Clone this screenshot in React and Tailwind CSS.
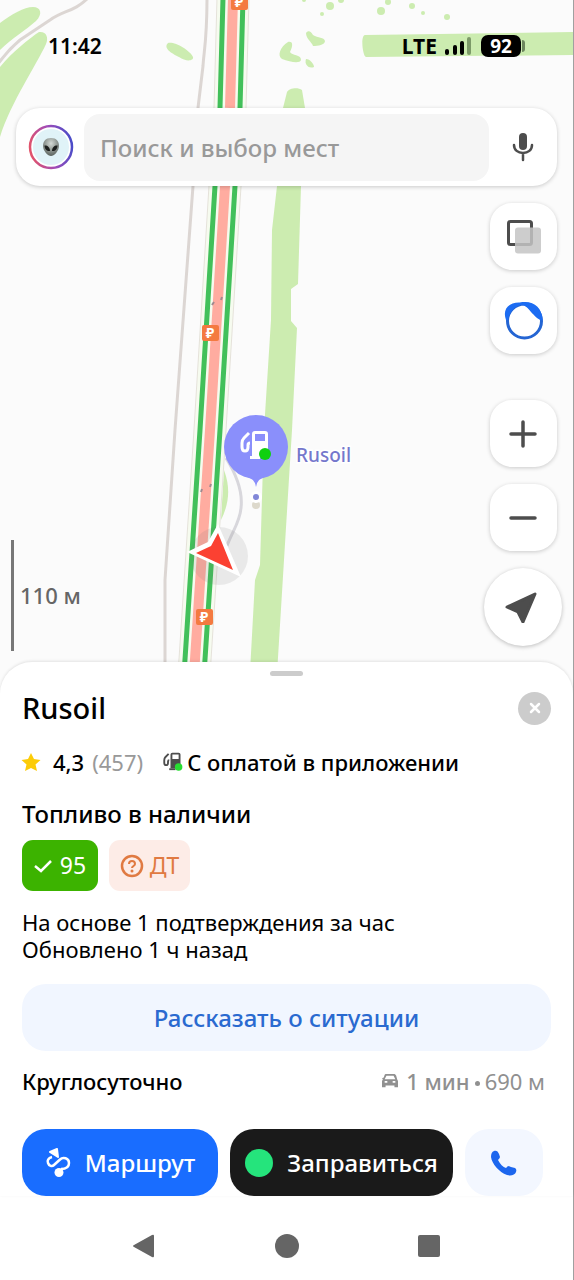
import { useState } from 'react';

const tolls = [
  { x: 239, y: 2 },
  { x: 210, y: 333 },
  { x: 204, y: 617 },
];

const treeDots = [
  { x: 304, y: 0, r: 2 },
  { x: 322, y: 14, r: 2 },
  { x: 330, y: 6, r: 4 },
  { x: 341, y: 0, r: 3 },
  { x: 381, y: 11, r: 4 },
  { x: 388, y: 2, r: 3 },
  { x: 412, y: 6, r: 3 },
  { x: 423, y: 13, r: 2 },
  { x: 447, y: 17, r: 3 },
];

// shared by the map pin and the payment row, the colour comes from currentColor
function PumpShape({ dotColor }) {
  return (
    <>
      <path
        d="M9 3L4 8Q2 10 2 13V17Q2 21 5 21Q8 21 8 17V15Q8 13 10 13"
        fill="none"
        stroke="currentColor"
        strokeWidth="3"
        strokeLinejoin="round"
      />
      <path fillRule="evenodd" d="M15 1H25Q28 1 28 4V26H12V4Q12 1 15 1ZM15 4V11H25V4Z" fill="currentColor" />
      <rect x="10" y="26" width="10" height="3" fill="currentColor" />
      <circle cx="25" cy="24" r="6" fill={dotColor} />
    </>
  );
}

function MapCanvas() {
  return (
    <svg
      viewBox="0 0 574 690"
      preserveAspectRatio="xMinYMin slice"
      className="absolute inset-0 h-full w-full"
      aria-hidden="true"
    >
      <rect width="2000" height="690" fill="#fbfbfb" />

      {/* greenery */}
      <g fill="#ccecb0">
        <path d="M0 23C12 14 24 7 33 7C41 7 43 14 36 21C26 30 12 38 0 50Z" />
        <path d="M0 67C12 52 30 38 39 32C46 31 49 37 46 44C38 62 10 104 0 137Z" />
        <path d="M168 43C174 41 190 50 193 57C194 61 186 62 179 57C171 53 163 48 168 43Z" />
        <path d="M306 33C308 30 311 31 313 35C318 38 324 37 325 41C325 45 318 46 313 46C312 42 306 39 306 33Z" />
        <path d="M288 42C292 41 294 44 290 52C292 56 301 54 301 60C300 64 290 62 282 59C277 56 280 47 288 42Z" />
        <path d="M306 59C310 59 314 64 314 67C309 69 304 65 306 59Z" />
        <path d="M365 35L574 32H2000V55H574L366 57C363 57 360 36 365 35Z" />
        <path d="M287 92C289 88 298 87 302 90L305 108L301 186L298 284L291 289V321L297 328L292 430L276 690H249L255 580L260 565L264 430L271 320L272 230L277 186L283 108Z" />
        <path d="M224 470C230 486 230 502 221 520Z" />
        {treeDots.map((dot) => (
          <circle key={dot.x} cx={dot.x} cy={dot.y} r={dot.r} />
        ))}
      </g>

      {/* minor roads */}
      <g fill="none" stroke="#dcd6d3" strokeWidth="3">
        <path d="M88 -2C74 12 64 10 50 20L20 40Q8 50 -2 64" />
        <path d="M207 -2C207 40 204 50 203 66L198 108L193 186L175 430L165 580L165 690" />
        <path d="M226 458C236 474 243 492 241 508C240 522 232 532 227 546" stroke="#d8d7dc" />
      </g>

      {/* motorway */}
      <g fill="none" strokeLinejoin="round">
        <path d="M233 -2L230 108L225 186L210 430L193 690" stroke="#e5e2da" strokeWidth="33" />
        <path d="M233 -2L230 108L225 186L210 430L193 690" stroke="#f6fbef" strokeWidth="31" />
        <path d="M233 -2L230 108L225 186L210 430L193 690" stroke="#ffaca0" strokeWidth="10" />
        <path d="M223 -2L220 108L215 186L200 430L183 690" stroke="#42c05a" strokeWidth="5" />
        <path d="M243 -2L240 108L235 186L220 430L203 690" stroke="#42c05a" strokeWidth="5" />
        <path d="M212 305L214 302M221 300L222 297M201 492L202 489M210 487L211 484" stroke="#a08a90" strokeWidth="2" />
      </g>

      {tolls.map((toll) => (
        <g key={toll.y}>
          <rect x={toll.x - 8} y={toll.y - 8} width="17" height="16" rx="2" fill="#f47a40" />
          <text
            x={toll.x}
            y={toll.y + 5}
            textAnchor="middle"
            fontSize="14"
            className="fill-white font-['Noto_Sans',sans-serif] font-bold"
          >
            ₽
          </text>
        </g>
      ))}

      {/* current position */}
      <circle cx="219" cy="556" r="29" fill="#777777" fillOpacity="0.13" />
      <path d="M187 552L208 542L218 524L241 577Z" fill="#ffffff" />
      <path d="M196 553L211 546L218 533L233 570Z" fill="#fb4132" />

      {/* station pin */}
      <circle cx="256" cy="505" r="4" fill="#ddd9cc" />
      <circle cx="256" cy="497" r="6" fill="#ffffff" />
      <circle cx="256" cy="497" r="3" fill="#8288d8" />
      <path d="M244 476Q255 478 256 487Q257 478 268 476Z" fill="#8a8ffb" />
      <circle cx="256" cy="447" r="32" fill="#8a8ffb" />
      <text
        x="296"
        y="462"
        fontSize="19"
        stroke="#ffffff"
        strokeWidth="3"
        paintOrder="stroke"
        className="fill-[#7577cc] font-['Noto_Sans',sans-serif] font-medium"
      >
        Rusoil
      </text>
      <svg x="240" y="430" width="32" height="32" viewBox="0 0 32 32" className="text-white">
        <PumpShape dotColor="#0fd00f" />
      </svg>
    </svg>
  );
}

function StatusBar() {
  return (
    <div className="flex h-[92px] items-center justify-between pr-12 pl-12 text-black">
      <span className="text-[21px] leading-6 font-semibold">11:42</span>
      <div className="flex items-center">
        <span className="text-[21px] leading-6 font-bold">LTE</span>
        <svg viewBox="0 0 27 20" className="ml-2 h-5 w-[27px]" aria-hidden="true">
          <rect x="0" y="13" width="4" height="6" rx="2" />
          <rect x="8" y="9" width="4" height="10" rx="2" />
          <rect x="15" y="5" width="4" height="14" rx="2" />
          <rect x="22" y="1" width="4" height="18" rx="2" fill="#7c9a68" />
        </svg>
        <span className="ml-[9px] flex h-[22px] w-10 items-center justify-center rounded-[7px] bg-black text-[19px] leading-5 font-bold text-white">
          92
        </span>
        <span className="ml-px h-3 w-[3px] rounded-r-full bg-[#6c865c]" />
      </div>
    </div>
  );
}

function SearchBar() {
  const [query, setQuery] = useState('');

  return (
    <form
      onSubmit={(event) => event.preventDefault()}
      className="mx-4 mt-4 flex h-[78px] items-center rounded-3xl bg-white pl-3 shadow-[0_1px_4px_rgba(0,0,0,0.2)]"
    >
      <button type="button" aria-label="Профиль" className="shrink-0">
        <svg viewBox="0 0 46 46" className="h-[46px] w-[46px]" aria-hidden="true">
          <defs>
            <linearGradient id="ring" x1="0" y1="0.6" x2="1" y2="0.4">
              <stop offset="0" stopColor="#e2536a" />
              <stop offset="0.5" stopColor="#a14cb8" />
              <stop offset="1" stopColor="#4a4cc8" />
            </linearGradient>
            <radialGradient id="alien" cx="0.5" cy="0.3" r="0.7">
              <stop offset="0" stopColor="#d4dad6" />
              <stop offset="1" stopColor="#59625d" />
            </radialGradient>
          </defs>
          <circle cx="23" cy="23" r="21" fill="#ffffff" stroke="url(#ring)" strokeWidth="2.5" />
          <circle cx="23" cy="23" r="18" fill="#e0f3f8" />
          <path d="M23 14C28.5 14 31 17.5 31 22C31 27 26 32 23 32C20 32 15 27 15 22C15 17.5 17.5 14 23 14Z" fill="url(#alien)" />
          <path d="M16.5 21.5C19 21 22 23 22 27C19 27.5 16.5 25 16.5 21.5Z" fill="#1c1f1e" />
          <path d="M29.5 21.5C27 21 24 23 24 27C27 27.5 29.5 25 29.5 21.5Z" fill="#1c1f1e" />
        </svg>
      </button>
      <input
        type="text"
        aria-label="Поиск и выбор мест"
        placeholder="Поиск и выбор мест"
        value={query}
        onChange={(event) => setQuery(event.target.value)}
        className="ml-2.5 h-[67px] min-w-0 flex-1 rounded-2xl bg-[#f5f5f5] px-4 text-[24px] font-medium text-black outline-none placeholder:text-[#999999]"
      />
      <button type="button" aria-label="Голосовой поиск" className="flex h-full w-[68px] shrink-0 items-center justify-center">
        <svg viewBox="0 0 22 30" className="h-[30px] w-[22px]" aria-hidden="true">
          <rect x="7" y="1" width="8" height="17" rx="4" fill="#4d4d4d" />
          <path d="M2 13C2 18 6 21 11 21C16 21 20 18 20 13M11 21V28" fill="none" stroke="#4d4d4d" strokeWidth="2.5" strokeLinecap="round" />
        </svg>
      </button>
    </form>
  );
}

function MapButton({ label, className = '', children }) {
  return (
    <button
      type="button"
      aria-label={label}
      className={`flex h-[67px] w-[67px] items-center justify-center rounded-[22px] bg-white shadow-[0_1px_4px_rgba(0,0,0,0.2)] ${className}`}
    >
      {children}
    </button>
  );
}

function MapControls() {
  return (
    <div className="mt-[17px] flex flex-col items-end pr-4">
      <MapButton label="Слои">
        <svg viewBox="0 0 36 36" className="h-9 w-9" aria-hidden="true">
          <rect x="2.5" y="2.5" width="23" height="23" rx="2" fill="none" stroke="#4d4d4d" strokeWidth="3" />
          <rect x="9" y="8.5" width="26" height="26" rx="3" fill="#c4c4c4" fillOpacity="0.85" />
        </svg>
      </MapButton>
      <MapButton label="Алиса" className="mt-[17px]">
        <svg viewBox="0 0 42 42" className="h-[42px] w-[42px]" aria-hidden="true">
          <circle cx="21.5" cy="21" r="17" fill="none" stroke="#2465d3" strokeWidth="3" />
          <path d="M3 20C-1 9 6 2 17 2.5C30 0 39 7 39.5 20C36 21 32 16 28 12C25 8 22 5 18 5C12 6 6 12 5 20Z" fill="#1c6cf2" />
        </svg>
      </MapButton>
      <MapButton label="Приблизить" className="mt-[46px]">
        <svg viewBox="0 0 28 28" className="mr-px h-7 w-7" aria-hidden="true">
          <path d="M2 14H26M14 2V26" stroke="#4d4d4d" strokeWidth="3.5" strokeLinecap="round" />
        </svg>
      </MapButton>
      <MapButton label="Отдалить" className="mt-[17px]">
        <svg viewBox="0 0 28 28" className="mr-px h-7 w-7" aria-hidden="true">
          <path d="M2 14H26" stroke="#4d4d4d" strokeWidth="3.5" strokeLinecap="round" />
        </svg>
      </MapButton>
    </div>
  );
}

function MapFooter() {
  return (
    <div className="mb-[39px] flex items-end justify-between pr-[11px] pl-[11px]">
      <div className="flex h-[111px] items-center border-l-3 border-[#777777] pl-1.5 text-[22px] font-medium text-[#666666]">
        110 м
      </div>
      <button
        type="button"
        aria-label="Моё местоположение"
        className="mb-[5px] flex h-[78px] w-[78px] items-center justify-center rounded-full bg-white shadow-[0_1px_4px_rgba(0,0,0,0.25)]"
      >
        <svg viewBox="0 0 32 32" className="mr-1 h-8 w-8" aria-hidden="true">
          <path d="M2 16L30 3L18 31L13 21Z" fill="#4d4d4d" stroke="#4d4d4d" strokeWidth="3" strokeLinejoin="round" />
        </svg>
      </button>
    </div>
  );
}

function PlaceSheet() {
  return (
    <section className="relative -mt-7 flex flex-col rounded-t-[32px] bg-white px-[22px] pt-[9px] shadow-[0_-1px_3px_rgba(0,0,0,0.1)]">
      <div className="h-[5px] w-[33px] self-center rounded-full bg-[#cccccc]" />

      <div className="mt-3.5 flex h-9 items-center justify-between">
        <h1 className="text-[29px] font-medium">Rusoil</h1>
        <button
          type="button"
          aria-label="Закрыть"
          className="flex h-[33px] w-[33px] items-center justify-center rounded-full bg-[#cccccc]"
        >
          <svg viewBox="0 0 12 12" className="h-3 w-3" aria-hidden="true">
            <path d="M2 2L10 10M10 2L2 10" stroke="#ffffff" strokeWidth="2.5" strokeLinecap="round" />
          </svg>
        </button>
      </div>

      <div className="mt-5 flex h-8 items-center text-[22px]">
        <svg viewBox="0 0 20 20" className="-ml-px h-5 w-5" aria-hidden="true">
          <path d="M10 1L13 7L19.5 8L14.5 12.5L16 19L10 16L4 19L5.5 12.5L0.5 8L7 7Z" fill="#fccc08" />
        </svg>
        <span className="ml-3 font-medium">4,3</span>
        <span className="ml-2 text-[#999999]">(457)</span>
        <svg viewBox="0 0 32 32" className="ml-5 h-5 w-5 text-[#4d4d4d]" aria-hidden="true">
          <PumpShape dotColor="#28dc32" />
        </svg>
        <span className="ml-1 font-medium">С оплатой в приложении</span>
      </div>

      <h2 className="mt-5 text-[24px] leading-8 font-medium">Топливо в наличии</h2>
      <div className="mt-2.5 flex gap-[11px] text-[23px]">
        <span className="flex h-[51px] w-[76px] items-center justify-center gap-2 rounded-[11px] bg-[#3cb300] text-white">
          <svg viewBox="0 0 18 14" className="h-3.5 w-[18px]" aria-hidden="true">
            <path d="M1 7L7 12L17 2" fill="none" stroke="#ffffff" strokeWidth="2.5" />
          </svg>
          95
        </span>
        <span className="flex h-[51px] w-[81px] items-center justify-center gap-1.5 rounded-[11px] bg-[#fdece7] text-[#e07a42]">
          <svg viewBox="0 0 24 24" className="h-6 w-6" aria-hidden="true">
            <circle cx="12" cy="12" r="10" fill="none" stroke="#e07a42" strokeWidth="2.5" />
            <path d="M9 10C9 6 15 6 15 10C15 12 12 12 12 14" fill="none" stroke="#e07a42" strokeWidth="2" />
            <circle cx="12" cy="17" r="1.5" fill="#e07a42" />
          </svg>
          ДТ
        </span>
      </div>
      <p className="mt-[18px] text-[22px] leading-[27px]">
        На основе 1 подтверждения за час
        <br />
        Обновлено 1 ч назад
      </p>

      <button type="button" className="mt-[21px] h-[67px] rounded-3xl bg-[#f1f6ff] text-[24px] font-medium text-[#2a6ad0]">
        Рассказать о ситуации
      </button>

      <div className="mt-3.5 flex h-8 items-center justify-between pr-1.5 text-[22px]">
        <span className="font-medium">Круглосуточно</span>
        <span className="flex items-center text-[#909090]">
          <svg viewBox="0 0 18 18" className="mr-2 h-4 w-4" aria-hidden="true">
            <path
              fillRule="evenodd"
              d="M4 1H14Q15 1 16 3L17 7L18 9V16H14V14H4V16H0V9L1 7L0 6L2 5L3 2ZM5 3L3 7H15L13 3ZM3 9V11H6V9ZM12 9V11H15V9Z"
              fill="#909090"
            />
          </svg>
          <span className="font-medium">1 мин</span>
          <span className="mx-[5px] mt-1 h-[5px] w-[5px] rounded-full bg-[#909090]" />
          690 м
        </span>
      </div>

      <div className="mt-8 flex gap-3 pr-2 text-[24px] font-medium text-white">
        <button type="button" className="flex h-[67px] flex-[196] items-center justify-center gap-3.5 rounded-3xl bg-[#196dff]">
          <svg viewBox="0 0 26 30" className="h-[30px] w-[26px]" aria-hidden="true">
            <path
              d="M7 9C3 10 2 13 3 15C4 18 7 19 9 17L15 11.5C18 8.500 24 10 24 15C24 19 21 21 16 21"
              fill="none"
              stroke="#ffffff"
              strokeWidth="2.5"
            />
            <path d="M5 4L12 1L13 9Z" fill="#ffffff" stroke="#ffffff" strokeWidth="2" strokeLinejoin="round" />
            <circle cx="14" cy="24.5" r="4.5" fill="#ffffff" />
          </svg>
          Маршрут
        </button>
        <button type="button" className="flex h-[67px] flex-[223] items-center justify-center gap-3.5 rounded-3xl bg-[#1a1a1a]">
          <span className="h-7 w-7 rounded-full bg-[#25e47c]" />
          Заправиться
        </button>
        <button type="button" aria-label="Позвонить" className="flex h-[67px] flex-[78] items-center justify-center rounded-3xl bg-[#f3f7ff]">
          <svg viewBox="0 0 26 26" className="h-[26px] w-[26px]" aria-hidden="true">
            <path d="M3 1C5 0 7 1 8 4L9 7Q9 8 7 10C9 14 12 17 15 18L17 16Q18 16 20 17L24 18Q26 19 25 22C24 25 20 26 16 25C8 22 1 14 0 7Q0 2 3 1Z" fill="#1c66ee" />
          </svg>
        </button>
      </div>
    </section>
  );
}

function SystemNav() {
  return (
    <nav className="flex h-[83px] items-center justify-between bg-white pt-4 pr-[133px] pl-[131px]">
      <button type="button" aria-label="Назад">
        <svg viewBox="0 0 24 24" className="h-6 w-6 fill-[#656565]" aria-hidden="true">
          <path d="M21 1Q23 0 23 2V22Q23 24 21 23L3 13Q1 12 3 11Z" />
        </svg>
      </button>
      <button type="button" aria-label="Домой">
        <span className="block h-6 w-6 rounded-full bg-[#656565]" />
      </button>
      <button type="button" aria-label="Недавние приложения">
        <span className="block h-[22px] w-[22px] rounded-xs bg-[#656565]" />
      </button>
    </nav>
  );
}

function App() {
  return (
    <div className="flex min-h-screen flex-col border-r border-[#a0a0a0] bg-white font-['Noto_Sans',sans-serif] text-black">
      <main className="relative flex flex-col">
        <MapCanvas />
        <div className="relative flex flex-col">
          <StatusBar />
          <SearchBar />
          <MapControls />
          <div className="-mt-[11px]">
            <MapFooter />
          </div>
        </div>
      </main>
      <PlaceSheet />
      <SystemNav />
    </div>
  );
}

export default App;
